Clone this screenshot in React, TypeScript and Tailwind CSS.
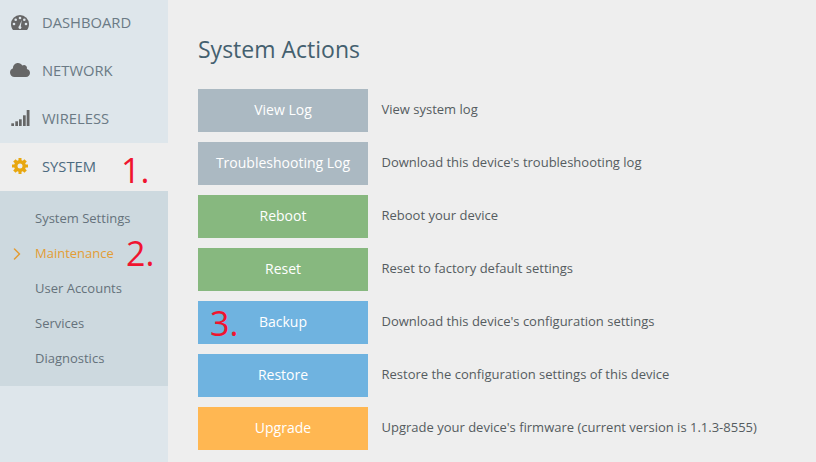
import { ChevronRight } from "lucide-react";
import { FaCloud } from "react-icons/fa";

const ACTIONS = [
  { label: "View Log", color: "bg-[#abb9c2]", text: "View system log" },
  { label: "Troubleshooting Log", color: "bg-[#abb9c2]", text: "Download this device's troubleshooting log" },
  { label: "Reboot", color: "bg-[#87b87f]", text: "Reboot your device" },
  { label: "Reset", color: "bg-[#87b87f]", text: "Reset to factory default settings" },
  { label: "Backup", color: "bg-[#6fb3e0]", text: "Download this device's configuration settings" },
  { label: "Restore", color: "bg-[#6fb3e0]", text: "Restore the configuration settings of this device" },
  { label: "Upgrade", color: "bg-[#ffb752]", text: "Upgrade your device's firmware (current version is 1.1.3-8555)" },
];

const SUBMENU = ["System Settings", "Maintenance", "User Accounts", "Services", "Diagnostics"];

function GaugeIcon() {
  const bg = "#dee6eb";
  return (
    <svg width="18" height="15" viewBox="0 0 18 15">
      <path d="M9 0a9 9 0 0 1 9 9c0 2.200-.7 4.300-2 6H2C.7 13.300 0 11.200 0 9a9 9 0 0 1 9-9z" fill="#666" />
      <circle cx="9" cy="3" r="1.300" fill={bg} />
      <circle cx="4.700" cy="4.700" r="1.300" fill={bg} />
      <circle cx="13.300" cy="4.700" r="1.300" fill={bg} />
      <circle cx="3" cy="9" r="1.300" fill={bg} />
      <circle cx="15" cy="9" r="1.300" fill={bg} />
      <path d="M10.800 5l-1 6.200a1.500 1.500 0 1 1-1.600-.1z" fill={bg} />
    </svg>
  );
}

function SignalIcon() {
  return (
    <svg width="19" height="16" viewBox="0 0 19 16" fill="#666">
      <rect x="0.300" y="13.300" width="2.700" height="2.700" />
      <rect x="4.300" y="11.300" width="2.700" height="4.700" />
      <rect x="8" y="9.300" width="2.700" height="6.700" />
      <rect x="12" y="5.300" width="2.700" height="10.700" />
      <rect x="15.700" y="0" width="2.800" height="16" />
    </svg>
  );
}

function CogIcon() {
  return (
    <svg width="16" height="16" viewBox="0 0 16 16" fill="#e8a70f">
      <path
        fillRule="evenodd"
        d="M6.500 0h3v2.300l1.300.5L12.400 1.200l2.400 2.400-1.600 1.600.5 1.300H16v3h-2.300l-.5 1.300 1.600 1.600-2.400 2.400-1.600-1.600-1.300.5V16h-3v-2.300l-1.300-.5-1.600 1.600-2.400-2.400 1.600-1.600-.5-1.300H0v-3h2.300l.5-1.300-1.600-1.600 2.400-2.400 1.600 1.600 1.300-.5zM8 5.500a2.500 2.500 0 1 0 0 5 2.500 2.500 0 0 0 0-5z"
      />
    </svg>
  );
}

function Mark({ children, className }: { children: string; className: string }) {
  return <span className={`absolute text-[34px] leading-none text-[#f0142f] ${className}`}>{children}</span>;
}

export default function App() {
  return (
    <div className="relative flex h-[462px] w-[816px] overflow-hidden bg-[#eeeeee] font-['Open_Sans',sans-serif]">
      <aside className="h-full w-[168px] shrink-0 bg-[#dee6eb]">
        <div className="-mt-px">
          <div className="flex h-12 items-center pb-[1px] text-[14.750px] text-[#6b7a85]">
            <span className="mb-[1px] flex w-[42px] justify-center pr-[2px]"><GaugeIcon /></span>
            DASHBOARD
          </div>
          <div className="flex h-12 items-center pb-[1px] text-[14.750px] text-[#6b7a85]">
            <span className="mb-[1px] flex w-[42px] justify-center pr-[2px] text-[#666]"><FaCloud size={20} /></span>
            NETWORK
          </div>
          <div className="flex h-12 items-center pb-[1px] text-[14.750px] text-[#6b7a85]">
            <span className="mb-[1px] flex w-[42px] justify-center pr-[2px]"><SignalIcon /></span>
            WIRELESS
          </div>
          <div className="flex h-12 items-center bg-[#eeeeee] pb-[1px] text-[14.750px] text-[#4c6a80]">
            <span className="mb-[1px] flex w-[42px] justify-center pr-[3px]"><CogIcon /></span>
            SYSTEM
          </div>
        </div>
        <ul className="bg-[#cdd9df] py-[10px]">
          {SUBMENU.map(item => (
            <li
              key={item}
              className={`relative flex h-[35px] items-center pl-[35px] text-[13px] ${item === "Maintenance" ? "text-[#e39d35]" : "text-[#65727b]"}`}
            >
              {item === "Maintenance" && <ChevronRight size={20} strokeWidth={1.8} className="absolute left-[7px]" />}
              {item}
            </li>
          ))}
        </ul>
      </aside>

      <main className="pl-[30px] pt-[32px]">
        <h1 className="h-[57px] text-[23px] leading-[34px] text-[#44606f]">System Actions</h1>
        <div className="flex flex-col gap-[10px]">
          {ACTIONS.map(a => (
            <div key={a.label} className="flex items-center">
              <div className={`flex h-[43px] w-[170px] items-center justify-center pb-[2px] text-[14px] text-white ${a.color}`}>{a.label}</div>
              <p className="pb-[2px] pl-[13.500px] text-[13px] text-[#555c60]">{a.text}</p>
            </div>
          ))}
        </div>
      </main>

      <Mark className="left-[121px] top-[153px]">1.</Mark>
      <Mark className="left-[126px] top-[236px]">2.</Mark>
      <Mark className="left-[210px] top-[306px]">3.</Mark>
    </div>
  );
}
